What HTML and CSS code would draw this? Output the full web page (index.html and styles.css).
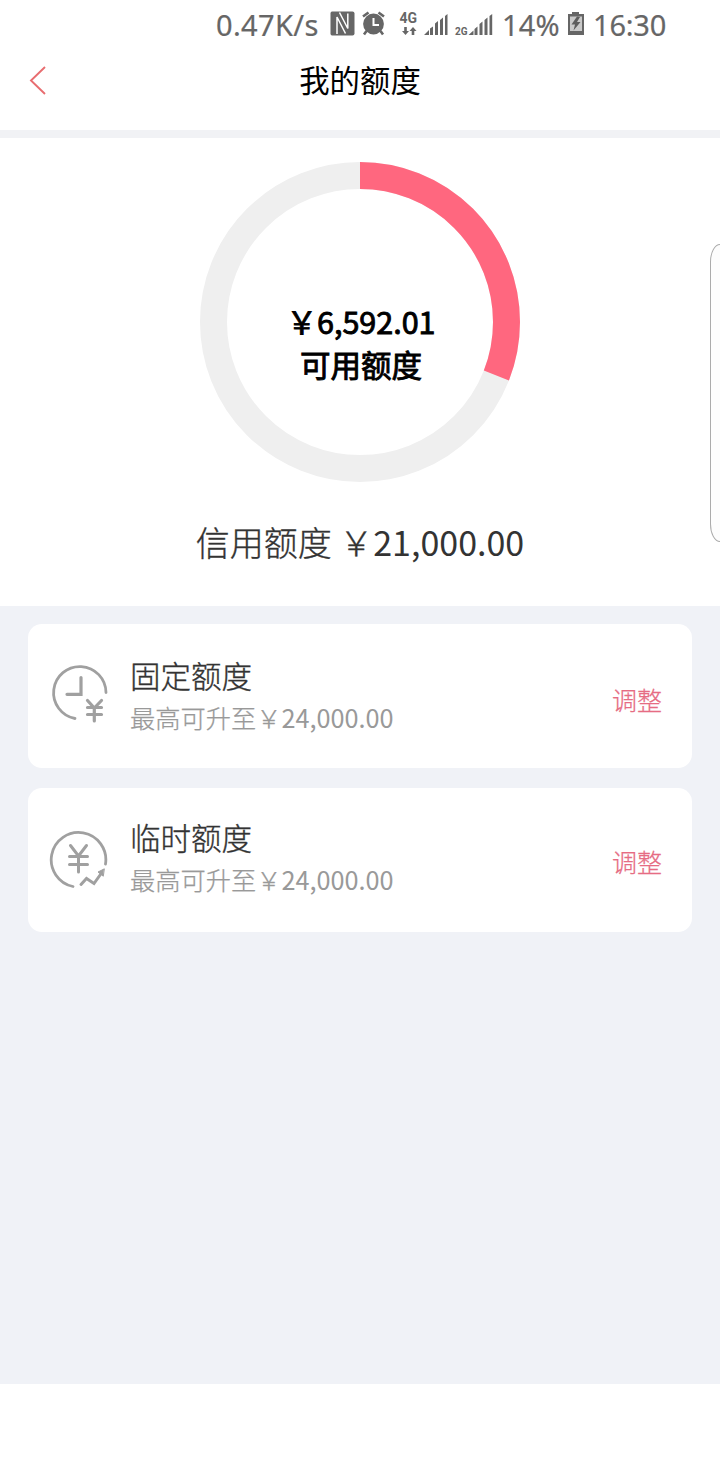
FILE: index.html
```html
<!DOCTYPE html>
<html lang="zh-CN">
<head>
<meta charset="utf-8">
<title>我的额度</title>
<link rel="stylesheet" href="styles.css">
</head>
<body>
<div class="screen">
  <div class="status">
    <span class="speed">0.47K/s</span>
    <svg class="status-icons" width="166" height="32" viewBox="328 8 166 32" fill="#666">
      <path d="M332 11.500H352.500Q354.500 11.500 354.500 13.500V33.500Q354.500 35.500 352.500 35.500H332Q330.500 35.500 330.500 33.500V13.500Q330.500 11.500 332 11.500Z"/>
      <path d="M337 34V17L345.500 33.500M339.500 12.500L347.800 28.500V13.500" fill="none" stroke="#fff" stroke-width="1.500"/>
      <circle cx="373.500" cy="24" r="10.400"/>
      <path d="M363 16.500L368.500 12.500M384 16.500L378.500 12.500M366.500 31L364 34.500M380.500 31L383 34.500" stroke="#666" stroke-width="2.600" fill="none"/>
      <path d="M373.500 18V25H379" stroke="#fff" stroke-width="2" fill="none"/>
      <text class="net4" x="399.500" y="23">4G</text>
      <path d="M404.200 27H406.800V31H409L405.500 35L402 31H404.200ZM411.700 35V31H409.500L413 27L416.500 31H414.300V35Z"/>
      <path d="M424 35L429 30V35ZM430 28.500L433 26.500V35H430ZM435 23.500L438 21V35H435ZM440 20L443 17.500V35H440ZM445 16L447.500 14V35H445Z"/>
      <text class="net2" x="455" y="34.500">2G</text>
      <path d="M468.500 35L473.500 30.500V35ZM474.500 29L477.500 26.500V35H474.500ZM479.500 24L482.500 21.500V35H479.500ZM484.500 20L487.500 17.500V35H484.500ZM489.500 16L492.200 14V35H489.500Z"/>
    </svg>
    <span class="percent">14%</span>
    <svg class="battery" width="18" height="26" viewBox="0 0 18 26">
      <path d="M5 1H12V3H17V24H1V3H5Z" fill="#666"/>
      <path d="M3 5.500H15V20H3Z" fill="#c9c9c9"/>
      <path d="M10 5.500L4.500 13.500H8L6.500 19.500L13.500 11H10L13 6Z" fill="#5d5d5d"/>
    </svg>
    <span class="clock">16:30</span>
  </div>
  <header class="nav">
    <svg class="back" width="20" height="32" viewBox="0 0 20 32"><path d="M17 3L3 16.500L17 30" fill="none" stroke="#e86d70" stroke-width="1.900"/></svg>
    <h1 class="title">我的额度</h1>
  </header>
  <section class="summary">
    <div class="ring">
      <svg class="ring-art" width="320" height="320" viewBox="0 0 320 320" fill="none" stroke-width="27">
        <circle cx="160" cy="160" r="146.500" stroke="#efefef"/>
        <circle cx="160" cy="160" r="146.500" stroke="#ff677f" pathLength="1000" stroke-dasharray="309.500 1000" transform="rotate(-90 160 160)"/>
      </svg>
      <div class="ring-text">
        <span class="amount">￥6,592.01</span>
        <span class="caption">可用额度</span>
      </div>
    </div>
    <p class="total">信用额度 ￥<span class="digits">21,000.00</span></p>
  </section>
  <main class="list">
    <article class="card">
      <svg class="icon" width="60" height="64" viewBox="49 662 60 64" fill="none" stroke="#a0a0a0" stroke-linecap="round">
        <path d="M75 718.500A26.200 26.200 0 1 1 106 692.500" stroke-width="2.800"/>
        <path d="M81 677.500V694.300H67" stroke-width="3.200"/>
        <path d="M87.500 700.500L94.300 708L101.500 700.500M94.300 708V721M87.500 707.500H101.500M87.500 714.500H101.500" stroke-width="3.200"/>
      </svg>
      <div class="info"><h2 class="name">固定额度</h2><p class="note">最高可升至￥<span class="digits">24,000.00</span></p></div>
      <a class="adjust">调整</a>
    </article>
    <article class="card second">
      <svg class="icon" width="60" height="64" viewBox="49 827 60 64" fill="none" stroke="#a0a0a0" stroke-linecap="round">
        <path d="M73 886.500A27.300 27.300 0 1 1 105.500 864" stroke-width="2.800"/>
        <path d="M70.500 845.500L78.500 856L86.500 845.500M78.500 856V872M69.500 856.500H87.500M69.500 864.500H87.500" stroke-width="3"/>
        <path d="M81 884.500L86.500 878.500L94 883.500L101.500 873" stroke-width="3"/>
        <path d="M104 869L98 872L103 876Z" fill="#a0a0a0" stroke-width="1"/>
      </svg>
      <div class="info"><h2 class="name">临时额度</h2><p class="note">最高可升至￥<span class="digits">24,000.00</span></p></div>
      <a class="adjust">调整</a>
    </article>
  </main>
  <div class="edge-handle"></div>
</div>
</body>
</html>
```
FILE: styles.css
```css
* { box-sizing: border-box; }
body, h1, h2, p { margin: 0; }
body { background: #fff; font-family: "Noto Sans CJK SC", "Noto Sans", sans-serif; font-weight: 300; }
h1, h2 { font-weight: 300; }
svg { display: block; flex: none; }
.screen { position: relative; width: 720px; height: 1480px; overflow: hidden; background: #fff; }
.status { display: flex; height: 50px; padding-left: 215px; color: #666; font: 29px/49px "Noto Sans", sans-serif; white-space: nowrap; -webkit-text-stroke: 0.2px #666; }
.speed { width: 113px; padding-left: 1px; letter-spacing: 0.35px; }
.status-icons { margin-top: 8px; }
.percent { width: 73px; padding-left: 8px; letter-spacing: 0.2px; }
.battery { margin-top: 11px; }
.clock { padding-left: 8px; letter-spacing: -0.2px; }
.net4 { font: 700 14px Roboto, sans-serif; -webkit-text-stroke: 0; }
.net2 { font: 700 10px Roboto, sans-serif; -webkit-text-stroke: 0; }
.nav { display: grid; grid-template-columns: 28px 20px 1fr 48px; height: 88px; border-bottom: 8px solid #f1f2f5; }
.back { grid-column: 2; margin-top: 14px; }
.title { grid-column: 3; text-align: center; font-size: 30.400px; font-weight: 400; line-height: 59px; color: #000; }
.summary { display: flex; flex-direction: column; align-items: center; height: 468px; padding-top: 24px; }
.ring { display: grid; width: 320px; height: 320px; }
.ring-art, .ring-text { grid-area: 1 / 1; }
.ring-text { display: flex; flex-direction: column; align-items: center; padding: 138px 0 0 2px; font-size: 30.500px; font-weight: 400; line-height: 43px; color: #000; -webkit-text-stroke: 0.9px #000; }
.total { margin-top: 35px; font-size: 34px; line-height: 50px; color: #333; white-space: pre; -webkit-text-stroke: 0.35px #333; }
.digits { font-weight: 400; -webkit-text-stroke: 0; }
.list { display: flex; flex-direction: column; gap: 20px; height: 778px; padding: 18px 28px; background: #f0f2f7; }
.card { display: flex; height: 144px; padding: 0 30px 0 21px; border-radius: 14px; background: #fff; }
.icon { margin-top: 38px; }
.info { flex: 1; padding: 29px 0 0 21px; }
.name { font-size: 30.500px; line-height: 44px; color: #333; -webkit-text-stroke: 0.35px #333; }
.note { font-size: 25.250px; line-height: 40px; color: #999; -webkit-text-stroke: 0.25px #999; }
.adjust { padding-top: 55px; font-size: 25px; line-height: 40px; color: #e66c83; -webkit-text-stroke: 0.25px #e66c83; }
.second .icon { margin-top: 39px; }
.second .info { padding-top: 27px; }
.second .adjust { padding-top: 53px; }
.edge-handle { position: absolute; top: 244px; right: -20px; width: 30px; height: 298px; border: 1px solid #aaa; border-radius: 10px / 18px; background: #fcfcfc; }
```
